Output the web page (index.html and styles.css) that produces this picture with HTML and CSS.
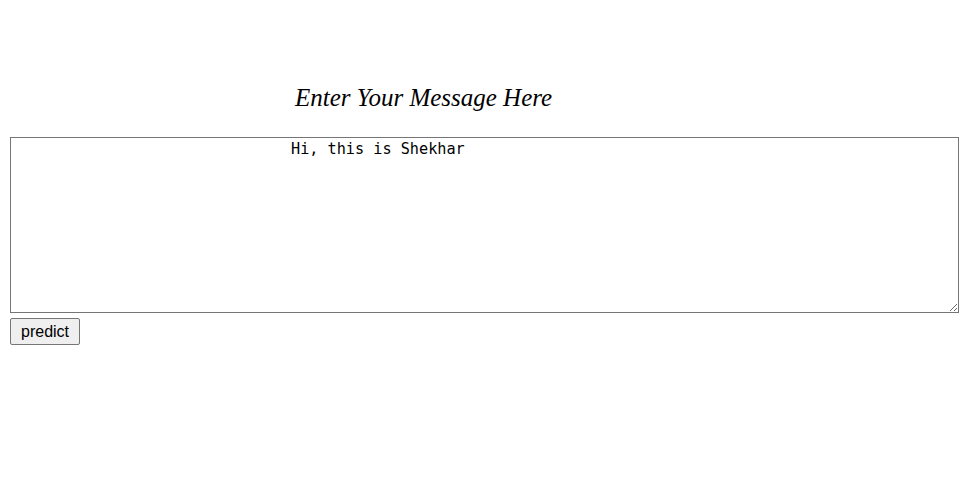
FILE: index.html
```html
<!DOCTYPE html>
<html>
<head>
<meta charset="utf-8">
<link rel="stylesheet" href="styles.css">
</head>
<body>
<div class="page">
  <h2 class="title">Enter Your Message Here</h2>
  <form class="form">
    <textarea class="message">Hi, this is Shekhar</textarea>
    <button type="button" class="predict">predict</button>
  </form>
</div>
</body>
</html>
```
FILE: styles.css
```css
html, body {
  margin: 0;
  padding: 0;
  background: #fff;
}
.page {
  padding: 84px 16px 0 10px;
}
.title {
  margin: 0 0 25px 285px;
  font-family: "Liberation Serif", serif;
  font-style: italic;
  font-weight: normal;
  font-size: 25px;
  line-height: 28px;
  color: #000;
}
.form {
  display: flex;
  flex-direction: column;
  align-items: flex-start;
  gap: 5px;
}
.message {
  box-sizing: border-box;
  width: 949px;
  height: 176px;
  margin: 0;
  padding: 2px;
  border: 1px solid #767676;
  font-family: "DejaVu Sans Mono", monospace;
  font-size: 15.2px;
  line-height: 19px;
  text-indent: 278px;
  color: #000;
  resize: both;
}
.predict {
  box-sizing: border-box;
  height: 27px;
  padding: 0 10px;
  margin: 0;
  font-family: "Liberation Sans", Arial, sans-serif;
  font-size: 16px;
  color: #000;
  background: #efefef;
  border: 1px solid #767676;
  border-radius: 2px;
}
```
